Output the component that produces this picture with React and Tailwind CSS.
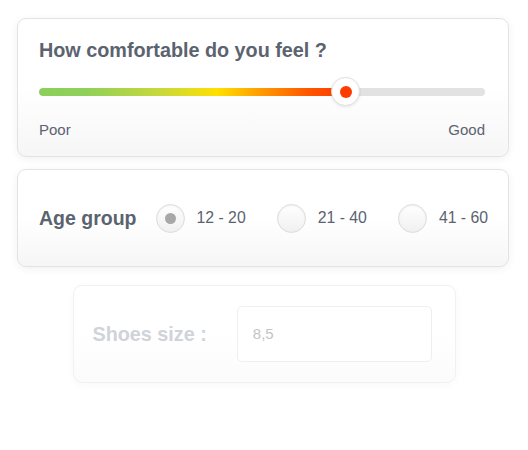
import React from "react";

const font = { fontFamily: '"Liberation Sans", Arial, Helvetica, sans-serif' };

function Radio({ checked, label }) {
  return (
    <div className="flex items-center">
      <div className="w-[29px] h-[29px] rounded-full border border-[#dcdcdc] bg-gradient-to-b from-[#ffffff] to-[#f0f0f0] shadow-[inset_0_1px_2px_rgba(0,0,0,0.06)] flex items-center justify-center">
        {checked && <div className="w-[11px] h-[11px] rounded-full bg-[#a8a8a8]" />}
      </div>
      <span className="ml-[12px] text-[15.8px] text-[#5b6370] leading-[20px]">{label}</span>
    </div>
  );
}

export default function App() {
  return (
    <div className="w-[528px] h-[450px] bg-white pt-[18px] flex flex-col items-center" style={font}>
      <div className="w-[492px] h-[139px] ml-[-2px] rounded-[9px] border border-[#e3e3e3] bg-gradient-to-b from-[#ffffff] from-50% to-[#f6f6f6] shadow-[0_2px_8px_rgba(0,0,0,0.06)] pl-[21px] pr-[23px] pt-[19px] flex flex-col">
        <div className="text-[19.8px] font-bold text-[#5b6370] leading-[24px]">How comfortable do you feel ?</div>
        <div className="relative h-[30px] mt-[15px] flex items-center">
          <div className="w-full h-[8px] rounded-full bg-[#e2e2e2] overflow-hidden">
            <div className="h-full w-[307px] rounded-full bg-[linear-gradient(to_right,#8bcf5a_0%,#8fd05a_15%,#c9d83a_40%,#ffe000_58%,#ff9c00_72%,#ff5500_88%,#ff3a00_100%)]" />
          </div>
          <div className="absolute left-[292px] top-[0px] w-[29px] h-[29px] rounded-full bg-white border border-[#e0e0e0] shadow-[0_1px_3px_rgba(0,0,0,0.1)] flex items-center justify-center">
            <div className="w-[12px] h-[12px] rounded-full bg-[#ff3c00]" />
          </div>
        </div>
        <div className="mt-[14px] flex justify-between text-[15px] text-[#5b6370] leading-[18px]">
          <span>Poor</span>
          <span>Good</span>
        </div>
      </div>

      <div className="mt-[12px] w-[492px] h-[98px] ml-[-2px] rounded-[9px] border border-[#e3e3e3] bg-gradient-to-b from-[#ffffff] from-50% to-[#f6f6f6] shadow-[0_2px_8px_rgba(0,0,0,0.06)] pl-[21px] flex items-center">
        <span className="text-[19.5px] font-bold text-[#5b6370] leading-[24px]">Age group</span>
        <div className="ml-[19px] flex items-center gap-[31px]">
          <Radio checked label="12 - 20" />
          <Radio label="21 - 40" />
          <Radio label="41 - 60" />
        </div>
      </div>

      <div className="mt-[18px] w-[383px] h-[98px] rounded-[9px] border border-[#f1f1f1] bg-gradient-to-b from-[#ffffff] from-50% to-[#fbfbfb] shadow-[0_2px_8px_rgba(0,0,0,0.03)] pl-[19px] flex items-center">
        <span className="text-[19.8px] font-bold text-[#d0d3d8] leading-[24px]">Shoes size :</span>
        <div className="ml-[30px] w-[195px] h-[56px] rounded-[5px] border border-[#efefef] bg-white flex items-center pl-[15px] text-[15px] text-[#c4c4c4]">
          8,5
        </div>
      </div>
    </div>
  );
}
